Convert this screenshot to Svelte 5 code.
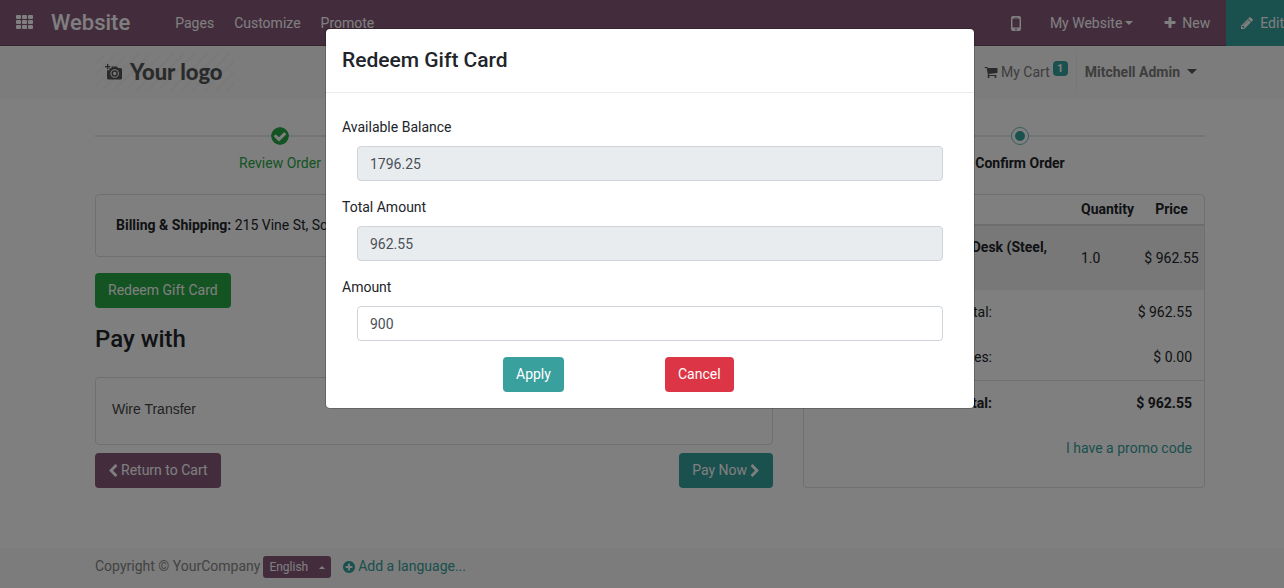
<script>
  const steps = [
    { label: 'Review Order', state: 'done' },
    { label: 'Address', state: 'done' },
    { label: 'Confirm Order', state: 'active' }
  ];
  const totals = [
    { label: 'Subtotal:', value: '$ 962.55' },
    { label: 'Taxes:', value: '$ 0.00' },
    { label: 'Total:', value: '$ 962.55', strong: true }
  ];
  let amount = $state('900');

  const icons = {
    cart: 'M704 1536q0 52-38 90t-90 38-90-38-38-90 38-90 90-38 90 38 38 90zm896 0q0 52-38 90t-90 38-90-38-38-90 38-90 90-38 90 38 38 90zm128-1088v512q0 24-16.5 42.5t-40.5 21.5l-1044 122q13 60 13 70 0 16-24 64h920q26 0 45 19t19 45-19 45-45 19h-1024q-26 0-45-19t-19-45q0-11 8-31.5t16-36 21.5-40 15.5-29.5l-177-823h-204q-26 0-45-19t-19-45 19-45 45-19h256q16 0 28.5 6.5t19.5 15.5 13 24.5 8 26 5.5 29.5 4.5 26h1201q26 0 45 19t19 45z',
    plus: 'M1600 736v192q0 40-28 68t-68 28h-416v416q0 40-28 68t-68 28h-192q-40 0-68-28t-28-68v-416h-416q-40 0-68-28t-28-68v-192q0-40 28-68t68-28h416v-416q0-40 28-68t68-28h192q40 0 68 28t28 68v416h416q40 0 68 28t28 68z',
    pencil: 'M491 1536l91-91-235-235-91 91v107h128v128h107zm523-928q0-22-22-22-10 0-17 7l-542 542q-7 7-7 17 0 22 22 22 10 0 17-7l542-542q7-7 7-17zm-54-192l416 416-832 832h-416v-416zm683 96q0 53-37 90l-166 166-416-416 166-165q36-38 90-38 53 0 91 38l235 234q37 39 37 91z',
    left: 'M1427 301l-531 531 531 531q19 19 19 45t-19 45l-166 166q-19 19-45 19t-45-19l-742-742q-19-19-19-45t19-45l742-742q19-19 45-19t45 19l166 166q19 19 19 45t-19 45z',
    right: 'M1363 877l-742 742q-19 19-45 19t-45-19l-166-166q-19-19-19-45t19-45l531-531-531-531q-19-19-19-45t19-45l166-166q19-19 45-19t45 19l742 742q19 19 19 45t-19 45z',
    plusCircle: 'M1344 960v-128q0-26-19-45t-45-19h-256v-256q0-26-19-45t-45-19h-128q-26 0-45 19t-19 45v256h-256q-26 0-45 19t-19 45v128q0 26 19 45t45 19h256v256q0 26 19 45t45 19h128q26 0 45-19t19-45v-256h256q26 0 45-19t19-45zm320-64q0 209-103 385.5t-279.5 279.5-385.5 103-385.5-103-279.5-279.5-103-385.5 103-385.5 279.5-279.5 385.5-103 385.5 103 279.5 279.5 103 385.5z',
    check: 'M1412 734q0-28-18-46l-91-90q-19-19-45-19t-45 19l-408 407-226-226q-19-19-45-19t-45 19l-91 90q-18 18-18 46 0 27 18 45l362 362q19 19 45 19 27 0 46-19l543-543q18-18 18-45zm252 162q0 209-103 385.5t-279.5 279.5-385.5 103-385.5-103-279.5-279.5-103-385.5 103-385.5 279.5-279.5 385.5-103 385.5 103 279.5 279.5 103 385.5z'
  };
</script>

{#snippet icon(name, box = '0 0 1792 1792', cls = '')}
  <svg class="icon {cls}" viewBox={box} aria-hidden="true"><path d={icons[name]} /></svg>
{/snippet}

<div class="page">
  <nav class="topbar">
    <button class="apps" aria-label="Applications">
      <svg width="18" height="14" viewBox="0 0 18 14" aria-hidden="true">
        {#each [0, 5, 10] as y}
          {#each [0, 6, 12] as x}
            <rect {x} {y} width="5" height="4" rx="1" />
          {/each}
        {/each}
      </svg>
    </button>
    <a class="brand" href="#website">Website</a>
    <div class="menu">
      <a href="#pages">Pages</a>
      <a href="#customize">Customize</a>
      <a href="#promote">Promote</a>
    </div>
    <div class="tools">
      <button class="tool mobile" aria-label="Mobile preview">
        <svg width="10" height="15" viewBox="0 0 10 15" aria-hidden="true">
          <path fill-rule="evenodd" d="M2 0h6a2 2 0 0 1 2 2v11a2 2 0 0 1-2 2H2a2 2 0 0 1-2-2V2a2 2 0 0 1 2-2zM1.500 2.500v9h7v-9zM5 12.400a.9.900 0 1 0 0 1.800.9.900 0 0 0 0-1.800zM3.700 1v.6h2.600V1z" />
        </svg>
      </button>
      <button class="tool site">My Website<span class="caret"></span></button>
      <button class="tool new">{@render icon('plus')}New</button>
      <button class="tool edit">{@render icon('pencil')}Edit</button>
    </div>
  </nav>

  <header class="site-header">
    <div class="container header-row">
      <a class="logo" href="#home">
        <svg width="17" height="16" viewBox="0 0 17 16" aria-hidden="true">
          <path fill-rule="evenodd" d="M2 0h1.300v2h2v1.300h-2v2H2v-2H0V2h2zM6.500 2.500h5.500l1 1.500h2.500A1.500 1.500 0 0 1 17 5.500v8.500a1.500 1.500 0 0 1-1.500 1.500H3.500A1.500 1.500 0 0 1 2 14V6.300h2.300v-2h2.200zM9.700 5.200a4.300 4.300 0 1 0 0 8.600 4.300 4.300 0 0 0 0-8.600z" />
          <path fill-rule="evenodd" d="M9.700 6.300a3.200 3.200 0 1 0 0 6.400 3.200 3.200 0 0 0 0-6.400zm0 1.500a1.700 1.700 0 1 1 0 3.400 1.700 1.700 0 0 1 0-3.400z" />
        </svg>
        <span>Your logo</span>
      </a>
      <div class="account">
        <a class="cart" href="#cart">{@render icon('cart')}<span>My Cart</span><span class="badge">1</span></a>
        <button class="user">Mitchell Admin<span class="caret"></span></button>
      </div>
    </div>
  </header>

  <main class="container">
    <ol class="wizard">
      {#each steps as step}
        <li class={step.state}>
          <span class="marker">
            {#if step.state === 'done'}
              {@render icon('check', '128 128 1536 1536', 'tick')}
            {:else}
              <span class="dot"></span>
            {/if}
          </span>
          <span>{step.label}</span>
        </li>
      {/each}
    </ol>

    <div class="columns">
      <section>
        <div class="card address"><b>Billing &amp; Shipping:</b> 215 Vine St, Scranton PA 18503, United States</div>
        <button class="btn green">Redeem Gift Card</button>
        <h3>Pay with</h3>
        <div class="card method">Wire Transfer</div>
        <div class="actions">
          <a class="btn purple" href="#cart">{@render icon('left', '256 0 1280 1792', 'chev')}Return to Cart</a>
          <button class="btn teal">Pay Now{@render icon('right', '256 0 1280 1792', 'chev')}</button>
        </div>
      </section>

      <section class="card summary">
        <table class="items">
          <colgroup>
            <col class="c-thumb" />
            <col />
            <col class="c-qty" />
            <col class="c-price" />
          </colgroup>
          <thead>
            <tr><th colspan="2">Product</th><th>Quantity</th><th class="price">Price</th></tr>
          </thead>
          <tbody>
            <tr>
              <td></td>
              <td><b>Customizable Desk (Steel, White)</b></td>
              <td>1.0</td>
              <td class="price">$ 962.55</td>
            </tr>
          </tbody>
        </table>
        <table class="totals">
          <tbody>
            {#each totals as row}
              <tr class:strong={row.strong}><td>{row.label}</td><td>{row.value}</td></tr>
            {/each}
            <tr><td colspan="2"><a href="#promo">I have a promo code</a></td></tr>
          </tbody>
        </table>
      </section>
    </div>
  </main>

  <footer>
    <div class="container footer-row">
      <span class="copy">Copyright © YourCompany</span>
      <button class="lang">English<span class="caret up"></span></button>
      <a class="add" href="#language">{@render icon('plusCircle')}Add a language...</a>
    </div>
  </footer>

  <div class="backdrop">
    <div class="modal" role="dialog" aria-modal="true" aria-labelledby="modal-title">
      <h4 id="modal-title">Redeem Gift Card</h4>
      <form onsubmit={(e) => e.preventDefault()}>
        <label for="balance">Available Balance</label>
        <input id="balance" type="text" value="1796.25" readonly />
        <label for="total">Total Amount</label>
        <input id="total" type="text" value="962.55" readonly />
        <label for="amount">Amount</label>
        <input id="amount" type="text" bind:value={amount} />
        <div class="modal-actions">
          <div class="first"><button class="btn apply">Apply</button></div>
          <div><button class="btn cancel" type="button">Cancel</button></div>
        </div>
      </form>
    </div>
  </div>
</div>

<style>
  :global(body) {
    overflow-x: hidden;
    background: #fff;
  }
  .page,
  .page * {
    box-sizing: border-box;
  }
  /* The page keeps a scrollbar gutter's worth of width past the window edge. */
  .page {
    position: relative;
    display: flex;
    flex-direction: column;
    width: calc(100% + 16px);
    min-height: 100vh;
    background: #fff;
    color: #212529;
    font: 14px/21px Roboto, sans-serif;
  }
  button,
  input {
    font: inherit;
    color: inherit;
  }
  button {
    border: 0;
    padding: 0;
    background: none;
  }
  a {
    color: #35a09c;
    text-decoration: none;
  }
  b {
    font-weight: 700;
  }
  .icon {
    width: 14px;
    height: 14px;
    flex: none;
    fill: currentColor;
  }
  .container {
    width: 100%;
    max-width: 1140px;
    margin: 0 auto;
    padding: 0 15px;
  }
  .caret {
    display: inline-block;
    border: 4px solid transparent;
    border-top-color: currentColor;
    border-bottom: 0;
  }
  .caret.up {
    border-top: 0;
    border-bottom: 4px solid currentColor;
  }

  .topbar {
    display: flex;
    align-items: stretch;
    height: 46px;
    background: #875a7b;
    box-shadow: inset 0 -1px #68465f;
    color: #fff;
  }
  .topbar a {
    color: #fff;
  }
  .apps {
    display: flex;
    align-items: center;
    padding: 0 17px 2px 16px;
    fill: #fff;
  }
  .brand {
    align-self: center;
    padding-bottom: 1px;
    font-size: 22px;
    font-weight: 500;
  }
  .menu {
    display: flex;
    align-items: center;
    gap: 20px;
    margin-left: 45px;
  }
  .tools {
    display: flex;
    margin-left: auto;
  }
  .tool {
    display: flex;
    align-items: center;
    padding: 0 15px;
  }
  .mobile {
    padding: 0 14px;
    fill: #fff;
  }
  .site .caret {
    margin-left: 3px;
  }
  .new {
    gap: 5px;
    padding-right: 16px;
  }
  .edit {
    gap: 6px;
    padding: 0 16px 0 14px;
    background: #35a09c;
  }

  .site-header {
    background: #f8f8f8;
    border-bottom: 1px solid #fbfbfb;
  }
  .header-row {
    display: flex;
    align-items: center;
    justify-content: space-between;
    height: 52px;
  }
  .logo {
    display: flex;
    align-items: center;
    gap: 8px;
    height: 36px;
    padding: 0 11px 0 10px;
    color: #555;
    fill: #555;
    font: 900 22px/26px Lato, sans-serif;
    background: repeating-linear-gradient(135deg, #f8f8f8 0 6px, #f3f3f3 6px 8px);
  }
  .account {
    display: flex;
    align-items: center;
  }
  .cart {
    display: flex;
    align-items: center;
    gap: 3px;
    height: 36px;
    padding-right: 8px;
    border-right: 1px solid #ededed;
    color: #7c7c7c;
  }
  .cart .icon {
    color: #555;
  }
  .badge {
    align-self: flex-start;
    margin-top: 7px;
    padding: 0 4px;
    min-width: 15px;
    border-radius: 4px;
    background: #35a09c;
    color: #fff;
    font-size: 11px;
    font-weight: 700;
    line-height: 15px;
    text-align: center;
  }
  .user {
    padding: 0 8px;
    color: #7c7c7c;
    font-weight: 700;
  }
  .user .caret {
    margin-left: 7px;
    vertical-align: 3px;
    border-width: 5px 5px 0;
    color: #555;
  }

  .wizard {
    display: grid;
    grid-template-columns: repeat(3, 1fr);
    margin: 28px 0 20px;
    padding: 0;
    list-style: none;
    text-align: center;
  }
  .wizard li {
    display: flex;
    flex-direction: column;
    gap: 8px;
  }
  .wizard .done {
    color: #28a745;
  }
  .wizard .active {
    color: #212529;
    font-weight: 700;
  }
  .marker {
    display: flex;
    align-items: center;
    justify-content: center;
    height: 18px;
    background: linear-gradient(#e9e9e9, #e9e9e9) center / 100% 2px no-repeat;
  }
  .wizard .tick {
    width: 18px;
    height: 18px;
    border-radius: 50%;
    background: #fff;
  }
  .dot {
    display: grid;
    place-items: center;
    width: 18px;
    height: 18px;
    border: 1px solid #6db9b6;
    border-radius: 50%;
    background: #fff;
  }
  .dot::after {
    content: "";
    width: 10px;
    height: 10px;
    border-radius: 50%;
    background: #35a09c;
  }

  .columns {
    display: grid;
    grid-template-columns: 678fr 402fr;
    gap: 30px;
  }
  .card {
    border: 1px solid #dfdfdf;
    border-radius: 4px;
  }
  .address {
    padding: 20px;
    margin-bottom: 16px;
  }
  .btn {
    display: inline-flex;
    align-items: center;
    gap: 3px;
    height: 35px;
    padding: 0 13px;
    border-radius: 4px;
    color: #fff;
  }
  .green {
    background: #28a745;
  }
  .purple {
    background: #875a7b;
  }
  .teal {
    background: #35a09c;
  }
  .chev {
    width: 10px;
  }
  h3 {
    margin: 16px 0 23px;
    font-size: 24px;
    font-weight: 500;
    line-height: 30px;
  }
  .method {
    height: 68px;
    padding: 21px 16px;
    margin-bottom: 8px;
    color: #444;
    font-family: "Liberation Sans", Arial, sans-serif;
  }
  .actions {
    display: flex;
    justify-content: space-between;
  }

  .summary {
    padding-bottom: 15px;
  }
  table {
    width: 100%;
    border-collapse: collapse;
    table-layout: fixed;
  }
  .c-thumb {
    width: 73px;
  }
  .c-qty {
    width: 63px;
  }
  .c-price {
    width: 65px;
  }
  .items th {
    padding: 4px 5px;
    border-bottom: 2px solid #dcdcdc;
    font-weight: 700;
    text-align: left;
  }
  .items td {
    height: 65px;
    padding: 0 5px;
    background: #f0f0f0;
  }
  .items .price {
    text-align: center;
  }
  .totals td {
    padding: 12px;
    text-align: right;
  }
  .totals .strong td {
    border-top: 1px solid #dfdfdf;
    font-weight: 700;
  }

  footer {
    flex: 1;
    margin-top: 60px;
    background: #f8f8f8;
  }
  .footer-row {
    display: flex;
    align-items: center;
    padding-top: 8px;
  }
  .copy,
  .add {
    padding-bottom: 1px;
  }
  .copy {
    color: #868686;
  }
  .lang {
    display: flex;
    align-items: center;
    gap: 11px;
    height: 22px;
    margin: 0 11px 0 3px;
    padding: 0 6px;
    border-radius: 3px;
    background: #875a7b;
    color: #fff;
    font-size: 12px;
  }
  .lang .caret {
    border-width: 0 3px 3px;
  }
  .add {
    display: flex;
    align-items: center;
    gap: 2px;
  }

  .backdrop {
    position: absolute;
    inset: 0;
    padding: 28px 16px;
    background: rgba(0, 0, 0, 0.5);
  }
  .modal {
    max-width: 650px;
    margin: 0 auto;
    border: 1px solid rgba(0, 0, 0, 0.2);
    border-radius: 5px;
    background: #fff;
    background-clip: padding-box;
  }
  h4 {
    margin: 0;
    padding: 16px;
    border-bottom: 1px solid #e9ecef;
    font-size: 21px;
    font-weight: 500;
    line-height: 31px;
  }
  form {
    padding: 24px 0 16px;
  }
  label {
    display: block;
    margin: 0 16px 8px;
  }
  input {
    display: block;
    width: calc(100% - 62px);
    height: 35px;
    margin: 0 31px 16px;
    padding: 0 12px;
    border: 1px solid #ced4da;
    border-radius: 4px;
    background: #fff;
    color: #495057;
  }
  input[readonly] {
    background: #e9ecef;
  }
  .modal-actions {
    display: grid;
    grid-template-columns: repeat(4, 1fr);
  }
  .modal-actions div {
    display: flex;
    padding-left: 15px;
  }
  .first {
    grid-column: 2;
  }
  .apply {
    background: #3aa09e;
  }
  .cancel {
    background: #dc3545;
  }
</style>
